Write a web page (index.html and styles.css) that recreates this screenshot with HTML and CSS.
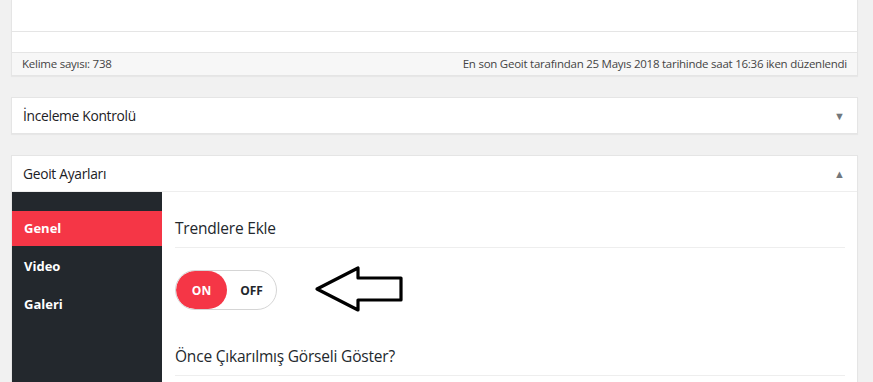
FILE: index.html
```html
<!DOCTYPE html>
<html lang="tr">
<head>
  <meta charset="UTF-8" />
  <title>Geoit Ayarları</title>
  <meta name="viewport" content="width=device-width, initial-scale=1" />
  <link rel="stylesheet" href="styles.css">
</head>
<body>
  <div class="wrap">
    <div class="postbox editor-box">
      <div class="editor-area"></div>
      <div class="editor-gap"></div>
      <div class="status-bar">
        <span>Kelime sayısı: 738</span>
        <span>En son Geoit tarafından 25 Mayıs 2018 tarihinde saat 16:36 iken düzenlendi</span>
      </div>
    </div>

    <div class="postbox">
      <div class="box-head">
        <h2>İnceleme Kontrolü</h2>
        <span class="caret">▼</span>
      </div>
    </div>

    <div class="postbox">
      <div class="box-head">
        <h2>Geoit Ayarları</h2>
        <span class="caret">▲</span>
      </div>
      <div class="settings">
        <ul class="tabs">
          <li class="active">Genel</li>
          <li>Video</li>
          <li>Galeri</li>
        </ul>
        <div class="panel">
          <h3 class="field-title">Trendlere Ekle</h3>
          <div class="field-row">
            <div class="switch">
              <span class="on">ON</span>
              <span class="off">OFF</span>
            </div>
            <svg class="pointer" width="92" height="50" viewBox="0 0 92 50">
              <polygon points="3,24 44,3 44,13 87,13 87,35 44,35 44,45" fill="none" stroke="#000" stroke-width="3.2" stroke-linejoin="round" />
            </svg>
          </div>
          <h3 class="field-title">Önce Çıkarılmış Görseli Göster?</h3>
        </div>
      </div>
    </div>
  </div>
</body>
</html>
```

FILE: styles.css
```css
body {
  margin: 0;
  background: #f1f1f1;
  font-family: 'Open Sans', 'Noto Sans', sans-serif;
  color: #23282d;
  overflow: hidden;
}
.wrap {
  padding: 0 15px 0 11px;
}
.postbox {
  background: #fff;
  border: 1px solid #e5e5e5;
  box-shadow: 0 1px 1px rgba(0, 0, 0, 0.04);
  margin-bottom: 21px;
}
.editor-box {
  border-top: none;
}
.editor-area {
  height: 31px;
  border-bottom: 1px solid #e5e5e5;
}
.editor-gap {
  height: 20px;
}
.status-bar {
  display: flex;
  justify-content: space-between;
  height: 22px;
  line-height: 22px;
  padding: 0 10px;
  background: #f7f7f7;
  border-top: 1px solid #e5e5e5;
  font-size: 11.5px;
  color: #444;
  letter-spacing: -0.25px;
}
.box-head {
  display: flex;
  align-items: center;
  justify-content: space-between;
  height: 35px;
  padding: 0 12px 0 11px;
}
.box-head h2 {
  margin: 0;
  font-size: 13.8px;
  font-weight: 400;
  letter-spacing: -0.3px;
  color: #1d2125;
}
.caret {
  font-size: 11px;
  color: #72777c;
}
.settings {
  display: flex;
  border-top: 1px solid #eee;
  height: 200px;
}
.tabs {
  list-style: none;
  margin: 0;
  padding: 19px 0 0;
  width: 150px;
  background: #23282d;
}
.tabs li {
  height: 35px;
  line-height: 35px;
  margin-bottom: 3px;
  padding-left: 12px;
  color: #fff;
  font-size: 13px;
  font-weight: 700;
}
.tabs li.active {
  background: #f53646;
}
.panel {
  flex: 1;
  padding: 0 12px 0 13px;
}
.field-title {
  margin: 0;
  padding: 25px 0 8px;
  font-size: 15.5px;
  font-weight: 500;
  border-bottom: 1px solid #eee;
  letter-spacing: -0.2px;
}
.field-row {
  display: flex;
  align-items: center;
  gap: 37px;
  padding: 17px 0 5px;
}
.switch {
  display: flex;
  align-items: center;
  width: 100px;
  height: 38px;
  border: 1px solid #d5d5d5;
  border-radius: 20px;
  overflow: hidden;
}
.switch span {
  display: flex;
  align-items: center;
  justify-content: center;
  height: 100%;
  font-size: 12px;
  font-weight: 700;
}
.switch .on {
  width: 51px;
  background: #f53646;
  color: #fff;
  border-radius: 20px;
}
.switch .off {
  flex: 1;
  color: #23282d;
}
.pointer {
  display: block;
}
```
